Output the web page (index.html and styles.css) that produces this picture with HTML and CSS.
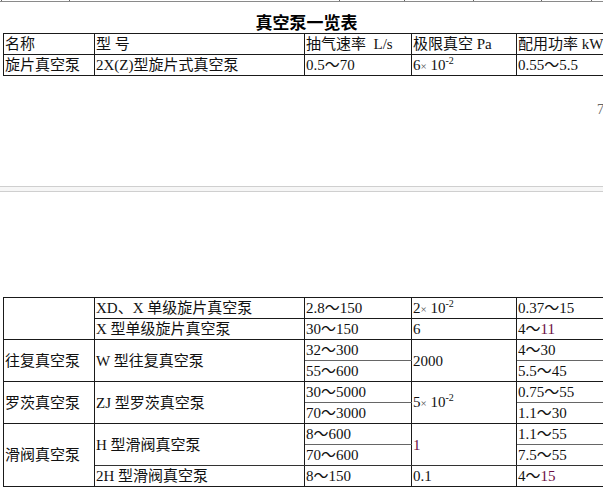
FILE: index.html
```html
<!DOCTYPE html>
<html lang="zh">
<head>
<meta charset="utf-8">
<title>真空泵一览表</title>
<link rel="stylesheet" href="styles.css">
</head>
<body>
<div class="page">
  <div class="prev">
    <span class="pc w1"></span><span class="pc w2"></span><span class="pc w3"></span><span class="pc w4"></span><span class="pc w5"></span><span class="pc w6"></span><span class="pc w7"></span>
  </div>
  <h1 class="title">真空泵一览表</h1>
  <table class="grid">
    <colgroup><col class="c1"><col class="c2"><col class="c3"><col class="c4"><col class="c5"></colgroup>
    <tr><td>名称</td><td>型&nbsp;号</td><td>抽气速率&nbsp; L/s</td><td>极限真空 Pa</td><td>配用功率 kW</td></tr>
    <tr><td>旋片真空泵</td><td>2X(Z)型旋片式真空泵</td><td>0.5～70</td><td>6<span class="x">×</span> 10<sup>-2</sup></td><td>0.55～5.5</td></tr>
  </table>
  <div class="gap"><span class="stray">7</span></div>
  <div class="sep"></div>
  <div class="gap2"></div>
  <table class="grid">
    <colgroup><col class="c1"><col class="c2"><col class="c3"><col class="c4"><col class="c5"></colgroup>
    <tr><td rowspan="2"></td><td>XD、X 单级旋片真空泵</td><td>2.8～150</td><td>2<span class="x">×</span> 10<sup>-2</sup></td><td>0.37～15</td></tr>
    <tr><td>X 型单级旋片真空泵</td><td>30～150</td><td>6</td><td>4～<span class="m">11</span></td></tr>
    <tr><td rowspan="2">往复真空泵</td><td rowspan="2">W 型往复真空泵</td><td class="g">32～300</td><td rowspan="2">2000</td><td class="g">4～30</td></tr>
    <tr><td>55～600</td><td>5.5～45</td></tr>
    <tr><td rowspan="2">罗茨真空泵</td><td rowspan="2">ZJ 型罗茨真空泵</td><td class="g">30～5000</td><td rowspan="2">5<span class="x">×</span> 10<sup>-2</sup></td><td class="g">0.75～55</td></tr>
    <tr><td>70～3000</td><td>1.1～30</td></tr>
    <tr><td rowspan="3">滑阀真空泵</td><td rowspan="2" class="g2">H 型滑阀真空泵</td><td class="g">8～600</td><td rowspan="2" class="g2"><span class="m">1</span></td><td class="g">1.1～55</td></tr>
    <tr><td class="g2">70～600</td><td class="g2">7.5～55</td></tr>
    <tr><td>2H 型滑阀真空泵</td><td>8～150</td><td>0.1</td><td>4～<span class="m">15</span></td></tr>
    <tr><td></td><td></td><td></td><td></td><td></td></tr>
  </table>
</div>
</body>
</html>
```
FILE: styles.css
```css
html, body {
  margin: 0;
  padding: 0;
  background: #fff;
  overflow: hidden;
}
.page {
  width: 603px;
  height: 487px;
  overflow: hidden;
  font-family: "Liberation Serif", "Noto Sans CJK SC", serif;
  font-size: 15px;
  color: #111;
}
.prev {
  display: flex;
  height: 1px;
  border-bottom: 1px solid #8a8a8a;
}
.pc {
  display: block;
  height: 1px;
  border-right: 1px solid #666;
  flex: none;
}
.w1 { width: 1px; }
.w2 { width: 67px; }
.w3 { width: 269px; }
.w4 { width: 64px; }
.w5 { width: 68px; }
.w6 { width: 67px; }
.w7 { width: 49px; }
.title {
  margin: 0;
  padding: 9px 0 0 10px;
  height: 22px;
  line-height: 22px;
  text-align: center;
  font-family: "Noto Sans CJK SC", sans-serif;
  font-size: 17px;
  font-weight: bold;
  color: #000;
}
.grid {
  margin-left: 3px;
  border-collapse: collapse;
  table-layout: fixed;
  width: 680px;
}
.c1 { width: 91px; }
.c2 { width: 210px; }
.c3 { width: 107px; }
.c4 { width: 105px; }
.c5 { width: 167px; }
.grid tr {
  height: 21px;
}
.grid td {
  border: 1px solid #1a1a1a;
  height: 19px;
  padding: 0 1px;
  line-height: 18px;
  white-space: nowrap;
  overflow: hidden;
  vertical-align: middle;
}
.grid td.g {
  border-bottom-color: #666;
}
.grid td.g2 {
  border-bottom-color: #333;
}
.grid sup {
  font-size: 10px;
  line-height: 0;
  vertical-align: 6px;
}
.x {
  font-size: 11px;
  color: #555;
}
.m {
  color: #6b1044;
}
.gap {
  height: 110px;
  position: relative;
}
.stray {
  position: absolute;
  left: 597px;
  top: 26px;
  line-height: 15px;
  color: #666;
  font-size: 14px;
}
.sep {
  height: 4px;
  border-top: 1px solid #cfcfcf;
  border-bottom: 1px solid #cfcfcf;
  background: #f6f6f6;
}
.gap2 {
  height: 105px;
}
```
